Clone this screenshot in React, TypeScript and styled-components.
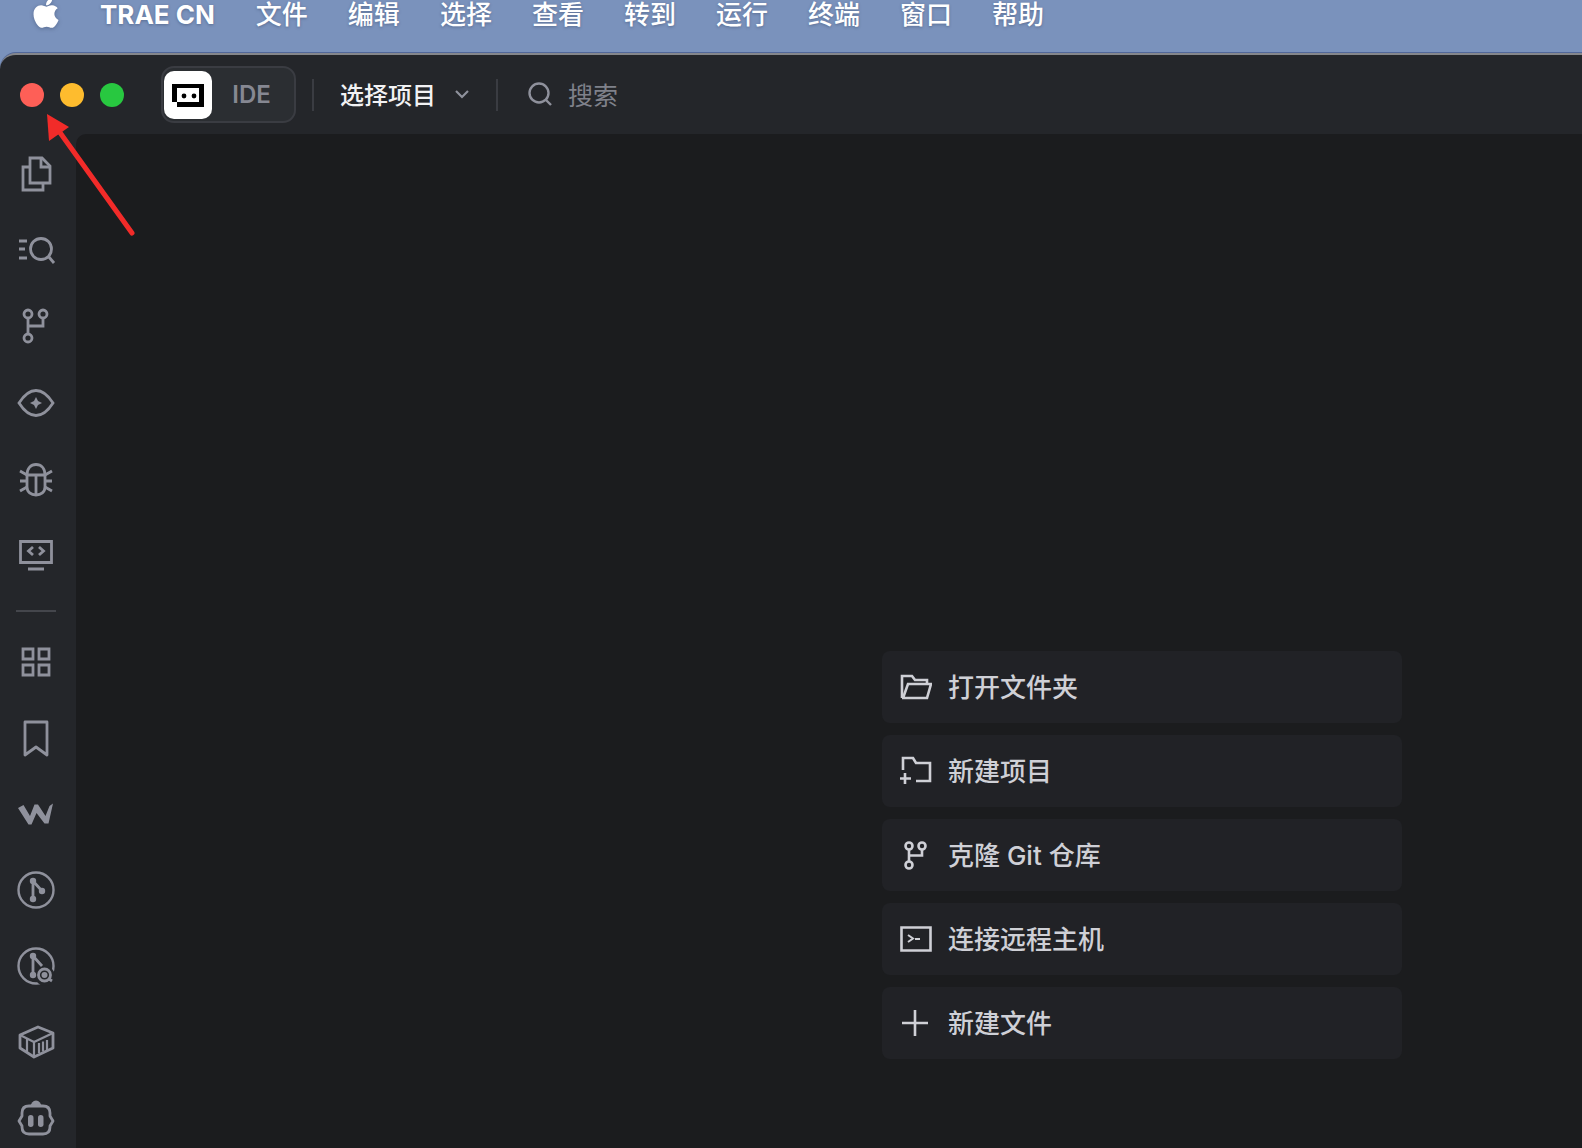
import React from "react";
import styled, { createGlobalStyle } from "styled-components";
import { FaApple } from "react-icons/fa";

const GlobalStyle = createGlobalStyle`
	html, body {
		margin: 0;
		padding: 0;
		height: 100%;
		overflow: hidden;
		background: #7a92bc;
		font-family: Inter, "Noto Sans CJK SC", "Noto Sans", sans-serif;
	}
`;

const Page = styled.div`
	position: relative;
	width: 1582px;
	height: 1148px;
	overflow: hidden;
	display: flex;
	flex-direction: column;
	background: #7a92bc;
`;

const MenuBar = styled.div`
	height: 53px;
	flex: none;
	display: flex;
	align-items: flex-start;
	padding-left: 31px;
	box-sizing: border-box;
	overflow: hidden;
`;

const AppleMark = styled(FaApple)`
	width: 30px;
	height: 34px;
	margin: -4px 39px 0 0;
	color: #fff;
	filter: drop-shadow(0 1px 2px rgba(30, 40, 70, 0.35));
`;

const MenuTitle = styled.span`
	font-size: 26px;
	line-height: 30px;
	font-weight: 700;
	color: #fff;
	margin-right: 41px;
	text-shadow: 0 1px 3px rgba(30, 40, 70, 0.35);
`;

const MenuItem = styled.span`
	font-size: 26px;
	line-height: 30px;
	font-weight: 500;
	color: #fff;
	margin-right: 40px;
	text-shadow: 0 1px 3px rgba(30, 40, 70, 0.35);
`;

const Window = styled.div`
	flex: 1;
	min-height: 0;
	display: flex;
	flex-direction: column;
	background: #24262a;
	border-top: 2px solid #85878c;
	border-top-left-radius: 16px;
	box-shadow: 0 -1px 0 rgba(50, 70, 125, 0.55);
	box-sizing: border-box;
	overflow: hidden;
`;

const TitleBar = styled.div`
	height: 79px;
	flex: none;
	display: flex;
	align-items: center;
	padding-left: 20px;
	box-sizing: border-box;
`;

const Light = styled.span<{ $color: string }>`
	width: 24px;
	height: 24px;
	border-radius: 50%;
	margin-right: 16px;
	background: ${(p) => p.$color};
`;

const ModeSwitch = styled.div`
	width: 135px;
	height: 57px;
	margin: 0 16px 0 21px;
	padding: 1px 3px 1px 1px;
	box-sizing: border-box;
	display: flex;
	align-items: center;
	background: #2b2e32;
	border: 2px solid #3a3c42;
	border-radius: 13px;
`;

const LogoTile = styled.div`
	width: 48px;
	height: 48px;
	padding-top: 2px;
	box-sizing: border-box;
	background: #fff;
	border-radius: 10px;
	display: flex;
	align-items: center;
	justify-content: center;
`;

const ModeLabel = styled.span`
	flex: 1;
	text-align: center;
	font-size: 24px;
	font-weight: 600;
	color: #868892;
`;

const BarDivider = styled.span`
	width: 2px;
	height: 32px;
	background: #3a3c42;
`;

const ProjectPicker = styled.div`
	display: flex;
	align-items: center;
	gap: 18px;
	margin: -2px 26px 0 26px;
	font-size: 24px;
	font-weight: 500;
	color: #f2f2f4;
`;

const SearchBox = styled.div`
	display: flex;
	align-items: center;
	gap: 15px;
	margin: -2px 0 0 29px;
	font-size: 25px;
	color: #7f818a;
`;

const Body = styled.div`
	flex: 1;
	min-height: 0;
	display: flex;
`;

const SideRail = styled.nav`
	width: 76px;
	flex: none;
	padding: 21px 0 0 16px;
	box-sizing: border-box;
`;

const RailGroup = styled.div`
	display: flex;
	flex-direction: column;
	gap: 36px;
`;

const RailDivider = styled.div`
	width: 40px;
	height: 2px;
	margin: 35px 0 30px;
	background: #44464c;
`;

const RailIcon = styled.svg`
	display: block;
	width: 40px;
	height: 40px;
	flex: none;
	fill: none;
	stroke: #8f919c;
	stroke-width: 2.8;
`;

const Workspace = styled.main`
	flex: 1;
	min-width: 0;
	background: #1b1c1e;
	border-top-left-radius: 10px;
	padding: 517px 0 0 806px;
	box-sizing: border-box;
`;

const ActionList = styled.div`
	width: 520px;
	display: flex;
	flex-direction: column;
	gap: 12px;
`;

const ActionCard = styled.div`
	height: 72px;
	padding-left: 18px;
	box-sizing: border-box;
	display: flex;
	align-items: center;
	gap: 16px;
	background: #212226;
	border-radius: 8px;
`;

const ActionLabel = styled.span`
	margin-top: -3px;
	font-size: 26px;
	font-weight: 500;
	color: #cfd0d6;
`;

const ActionIcon = styled.svg`
	display: block;
	width: 32px;
	height: 32px;
	flex: none;
	fill: none;
	stroke: #cfd0d6;
	stroke-width: 2.6;
`;

const Pointer = styled.svg`
	position: absolute;
	left: 0;
	top: 0;
	width: 160px;
	height: 250px;
	pointer-events: none;
`;

const railTop = [
	<>
		<path d="M14 3h12l8 8v17H14z" />
		<path d="M25 3v9h9" />
		<path d="M14 12H7v23h20v-7" />
	</>,
	<>
		<path d="M3 10h8M3 18h6M3 27h8" />
		<circle cx="25" cy="18" r="10.500" />
		<path d="M32.500 25.500 38 32" />
	</>,
	<>
		<circle cx="12" cy="7" r="4" />
		<circle cx="27" cy="7" r="4" />
		<circle cx="12" cy="31" r="4" />
		<path d="M12 11v16M27 11v8H12" />
	</>,
	<>
		<path d="M3 20Q11 7.500 20 7.500T37 20Q29 32.500 20 32.500T3 20z" />
		<path fill="#8f919c" stroke="none" d="M20 14l2 4 4 2-4 2-2 4-2-4-4-2 4-2z" />
	</>,
	<>
		<path d="M11 16c0-7 4-10.500 9-10.500S29 9 29 16v12c0 5-4 8-9 8s-9-3-9-8z" />
		<path d="M11 16h18M20 16v20M4 12l7 4M4 22h7M4 32l7-4M36 12l-7 4M36 22h-7M36 32l-7-4" />
	</>,
	<>
		<path d="M4.500 6.500h31v21h-31z" />
		<path d="M12 34h16M17 12l-4.500 4 4.500 4M23 12l4.500 4-4.500 4" />
	</>,
];

const railBottom = [
	<>
		<path d="M7 7h10v10H7zM23 7h10v10H23zM7 23h10v10H7zM23 23h10v10H23z" />
	</>,
	<>
		<path strokeLinejoin="round" d="M9 4h22v33l-11-8-11 8z" />
	</>,
	<>
		<path
			fill="#8f919c"
			stroke="none"
			d="M2 14 7.500 11l6.500 11 4.500-11.500h3.500l7.500 11.500 4-10 3.500-2.500L32.500 29.500h-4L20.500 19l-5 11.500h-3z"
		/>
	</>,
	<>
		<circle cx="20" cy="20" r="17.500" strokeWidth="2.400" />
		<circle fill="#8f919c" stroke="none" cx="17" cy="11" r="3.200" />
		<circle fill="#8f919c" stroke="none" cx="17" cy="29" r="3.200" />
		<circle fill="#8f919c" stroke="none" cx="26" cy="21" r="3.200" />
		<path d="M17 11v18M17 11l9 10" />
	</>,
	<>
		<circle cx="20" cy="20" r="17.500" strokeWidth="2.400" />
		<circle fill="#24262a" stroke="none" cx="29" cy="30" r="10" />
		<circle fill="#8f919c" stroke="none" cx="17" cy="10" r="3.200" />
		<circle fill="#8f919c" stroke="none" cx="17" cy="29" r="3.200" />
		<path d="M17 10v19M17 10l9 10" />
		<circle cx="28.500" cy="29" r="6" />
		<circle fill="#8f919c" stroke="none" cx="28.500" cy="29" r="3" />
		<path d="M33 33l3 2" />
	</>,
	<>
		<path strokeLinejoin="round" d="M4 13 22 5l15 6v15l-19 9-14-9z" />
		<path d="M4 13l14 7 19-9M18 20v15M11 16.500v14M23 21v10M27 19.500v10M31 18v10" strokeWidth="2.200" />
	</>,
	<>
		<path fill="#8f919c" stroke="none" d="M14.500 9a5.500 6.500 0 0 1 11 0z" />
		<path
			strokeLinejoin="round"
			d="M13 8h14q7 0 7 7v3l3 5-3 5v1q0 7-7 7H13q-7 0-7-7v-1l-3-5 3-5v-3q0-7 7-7z"
		/>
		<rect fill="#8f919c" stroke="none" x="12" y="17" width="5.500" height="12" rx="2.700" />
		<rect fill="#8f919c" stroke="none" x="22" y="17" width="5.500" height="12" rx="2.700" />
	</>,
];

const actions = [
	{
		label: "打开文件夹",
		icon: (
			<>
				<path d="M2 27V5h10l3 4h12v4" />
				<path d="M2 27h25l4-14H8L3 27" />
			</>
		),
	},
	{
		label: "新建项目",
		icon: (
			<>
				<path d="M3 15V3h10l3 5h14v18H16" />
				<path d="M5 18v11M0 23.500h11" />
			</>
		),
	},
	{
		label: "克隆 Git 仓库",
		icon: (
			<>
				<circle cx="9" cy="7" r="3.500" />
				<circle cx="22" cy="7" r="3.500" />
				<circle cx="9" cy="26" r="3.500" />
				<path d="M9 10.500v12M22 10.500v6H9" />
			</>
		),
	},
	{
		label: "连接远程主机",
		icon: (
			<>
				<path d="M1.500 4.500h29v23h-29z" />
				<path d="M8 12l5 3.500-5 3.500M15 16h5" strokeWidth="2" />
			</>
		),
	},
	{
		label: "新建文件",
		icon: <path d="M15 3v26M2 16h26" />,
	},
];

const menus = ["文件", "编辑", "选择", "查看", "转到", "运行", "终端", "窗口", "帮助"];

const App: React.FC = () => {
	return (
		<Page>
			<GlobalStyle />
			<MenuBar>
				<AppleMark />
				<MenuTitle>TRAE CN</MenuTitle>
				{menus.map((m) => (
					<MenuItem key={m}>{m}</MenuItem>
				))}
			</MenuBar>
			<Window>
				<TitleBar>
					<Light $color="#fe5f57" />
					<Light $color="#febc2e" />
					<Light $color="#28c840" />
					<ModeSwitch>
						<LogoTile>
							<svg width="34" height="26" viewBox="0 0 34 26">
								<path fill="#000" d="M1 1h32v23H6v-5H1z" />
								<path fill="#fff" d="M6 5h22v14H6z" />
								<circle cx="13" cy="13" r="2.400" fill="#000" />
								<circle cx="23" cy="13" r="2.400" fill="#000" />
							</svg>
						</LogoTile>
						<ModeLabel>IDE</ModeLabel>
					</ModeSwitch>
					<BarDivider />
					<ProjectPicker>
						选择项目
						<svg width="16" height="10" viewBox="0 0 16 10" fill="none" stroke="#8f919c" strokeWidth="2.200">
							<path d="M2 2l6 6 6-6" />
						</svg>
					</ProjectPicker>
					<BarDivider />
					<SearchBox>
						<svg width="26" height="26" viewBox="0 0 26 26" fill="none" stroke="#8f919c" strokeWidth="2.400">
							<circle cx="12" cy="12" r="9.500" />
							<path d="M19 19l5 5" />
						</svg>
						搜索
					</SearchBox>
				</TitleBar>
				<Body>
					<SideRail>
						<RailGroup>
							{railTop.map((icon, i) => (
								<RailIcon key={i} viewBox="0 0 40 40">
									{icon}
								</RailIcon>
							))}
						</RailGroup>
						<RailDivider />
						<RailGroup>
							{railBottom.map((icon, i) => (
								<RailIcon key={i} viewBox="0 0 40 40">
									{icon}
								</RailIcon>
							))}
						</RailGroup>
					</SideRail>
					<Workspace>
						<ActionList>
							{actions.map((a) => (
								<ActionCard key={a.label}>
									<ActionIcon viewBox="0 0 32 32">{a.icon}</ActionIcon>
									<ActionLabel>{a.label}</ActionLabel>
								</ActionCard>
							))}
						</ActionList>
					</Workspace>
				</Body>
			</Window>
			<Pointer viewBox="0 0 160 250">
				<path d="M132 233 56 127" stroke="#f22b29" strokeWidth="5" strokeLinecap="round" fill="none" />
				<path d="M47 114 69 127 49 141z" fill="#f22b29" />
			</Pointer>
		</Page>
	);
};

export default App;
